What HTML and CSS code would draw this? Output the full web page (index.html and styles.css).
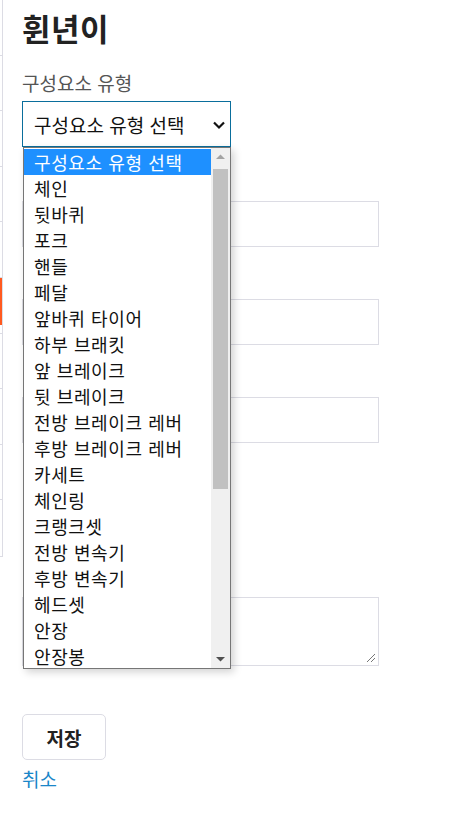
FILE: index.html
```html
<!DOCTYPE html>
<html lang="ko">
<head>
<meta charset="utf-8">
<link rel="stylesheet" href="styles.css">
</head>
<body>
<div class="page">
  <aside class="side">
    <div class="side-item"></div>
    <div class="side-item"></div>
    <div class="side-item"></div>
    <div class="side-item"></div>
    <div class="side-item"></div>
    <div class="side-item active"></div>
    <div class="side-item"></div>
    <div class="side-item"></div>
    <div class="side-item"></div>
    <div class="side-item"></div>
  </aside>
  <main class="main">
    <h1 class="title">휜년이</h1>
    <div class="field first">
      <label class="label">구성요소 유형</label>
      <div class="select-wrap">
        <div class="select">
          <span>구성요소 유형 선택</span>
          <svg class="chev" width="14" height="10" viewBox="0 0 14 10"><path d="M2 2.5 L7 7.5 L12 2.5" fill="none" stroke="#111" stroke-width="2.2"/></svg>
        </div>
        <div class="dropdown">
          <ul class="options">
            <li class="opt selected">구성요소 유형 선택</li>
            <li class="opt">체인</li>
            <li class="opt">뒷바퀴</li>
            <li class="opt">포크</li>
            <li class="opt">핸들</li>
            <li class="opt">페달</li>
            <li class="opt">앞바퀴 타이어</li>
            <li class="opt">하부 브래킷</li>
            <li class="opt">앞 브레이크</li>
            <li class="opt">뒷 브레이크</li>
            <li class="opt">전방 브레이크 레버</li>
            <li class="opt">후방 브레이크 레버</li>
            <li class="opt">카세트</li>
            <li class="opt">체인링</li>
            <li class="opt">크랭크셋</li>
            <li class="opt">전방 변속기</li>
            <li class="opt">후방 변속기</li>
            <li class="opt">헤드셋</li>
            <li class="opt">안장</li>
            <li class="opt">안장봉</li>
          </ul>
          <div class="scrollbar">
            <svg class="arrow" width="17" height="17" viewBox="0 0 17 17"><path d="M4 11 L8.5 6.5 L13 11 Z" fill="#a3a3a3"/></svg>
            <div class="track"><div class="thumb"></div></div>
            <svg class="arrow" width="17" height="17" viewBox="0 0 17 17"><path d="M4 6 L8.5 10.5 L13 6 Z" fill="#505050"/></svg>
          </div>
        </div>
      </div>
    </div>
    <div class="field">
      <label class="label"></label>
      <div class="input"></div>
    </div>
    <div class="field">
      <label class="label"></label>
      <div class="input"></div>
    </div>
    <div class="field">
      <label class="label"></label>
      <div class="input"></div>
    </div>
    <div class="field wide-gap">
      <label class="label"></label>
      <div class="input short"></div>
    </div>
    <div class="field">
      <label class="label"></label>
      <div class="textarea">
        <svg class="grip" width="10" height="10" viewBox="0 0 10 10"><path d="M9 1 L1 9 M9 5 L5 9" stroke="#777" stroke-width="1" fill="none"/></svg>
      </div>
    </div>
    <div class="actions">
      <button class="btn">저장</button>
      <a class="link" href="#">취소</a>
    </div>
  </main>
</div>
</body>
</html>
```
FILE: styles.css
```css
* { box-sizing: border-box; }
html, body { margin: 0; padding: 0; background: #fff; }
body {
  font-family: "Noto Sans CJK KR", "Noto Sans", sans-serif;
  color: #222;
  width: 453px;
  height: 832px;
  overflow: hidden;
}
.page {
  display: flex;
  align-items: flex-start;
}
.side {
  width: 3px;
  flex: none;
  border-right: 1px solid #dcdce4;
  border-bottom: 1px solid #dcdce4;
  display: flex;
  flex-direction: column;
}
.side-item {
  height: 55.6px;
  border-bottom: 1px solid #dcdce4;
}
.side-item:last-child { border-bottom: none; }
.side-item.active {
  background: linear-gradient(#ff5a1f, #ff5a1f) no-repeat 0 0 / 2px 47px;
}
.main {
  flex: 1;
  padding: 7px 0 0 19px;
}
.title {
  margin: 0;
  font-size: 31px;
  font-weight: 700;
  line-height: 42px;
  color: #222;
  letter-spacing: 0.5px;
}
.field {
  display: flex;
  flex-direction: column;
  margin-bottom: 22px;
  width: 357px;
}
.field.first { margin-top: 22px; margin-bottom: 24px; }
.field.wide-gap { margin-bottom: 26px; }
.label {
  font-size: 19px;
  line-height: 24px;
  min-height: 24px;
  color: #555;
  margin-bottom: 6px;
}
.select-wrap { position: relative; width: 209px; }
.select {
  height: 46px;
  border: 1px solid #0a6e9c;
  display: flex;
  align-items: center;
  justify-content: space-between;
  padding: 0 4px 0 11px;
  font-size: 19px;
  color: #111;
}
.chev { margin-top: 2px; }
.input {
  height: 46px;
  border: 1px solid #dcdce4;
}
.input.short { width: 200px; border-color: transparent; }
.textarea {
  height: 69px;
  border: 1px solid #dcdce4;
  position: relative;
}
.grip { position: absolute; right: 2px; bottom: 2px; }
.dropdown {
  position: absolute;
  top: 100%;
  left: 1px;
  width: 208px;
  height: 522px;
  background: #fff;
  border: 1px solid #767676;
  box-shadow: 3px 3px 8px rgba(0,0,0,0.18);
  display: flex;
  z-index: 10;
  padding-top: 1px;
}
.options {
  list-style: none;
  margin: 0;
  padding: 0;
  flex: 1;
}
.opt {
  height: 26px;
  line-height: 26px;
  padding-left: 10px;
  font-size: 18px;
  letter-spacing: 0.6px;
  color: #111;
  white-space: nowrap;
}
.opt.selected { background: #1e90ff; color: #fff; }
.scrollbar {
  width: 19px;
  flex: none;
  background: #f0f0f0;
  display: flex;
  flex-direction: column;
  margin-top: -1px;
  padding-right: 1px;
}
.arrow { display: block; flex: none; margin-left: 1px; }
.track { flex: 1; padding: 4px 1px 0 2px; }
.thumb { height: 320px; background: #c1c1c1; }
.actions {
  display: flex;
  flex-direction: column;
  align-items: flex-start;
  margin-top: 48px;
}
.btn {
  width: 84px;
  height: 46px;
  border: 1px solid #dcdce4;
  border-radius: 5px;
  background: #fff;
  font-family: "Noto Sans CJK KR", sans-serif;
  font-weight: 700;
  font-size: 19px;
  color: #222;
  padding: 0;
}
.link {
  margin-top: 6px;
  font-size: 19px;
  line-height: 26px;
  color: #1a86c8;
  text-decoration: none;
}
```
